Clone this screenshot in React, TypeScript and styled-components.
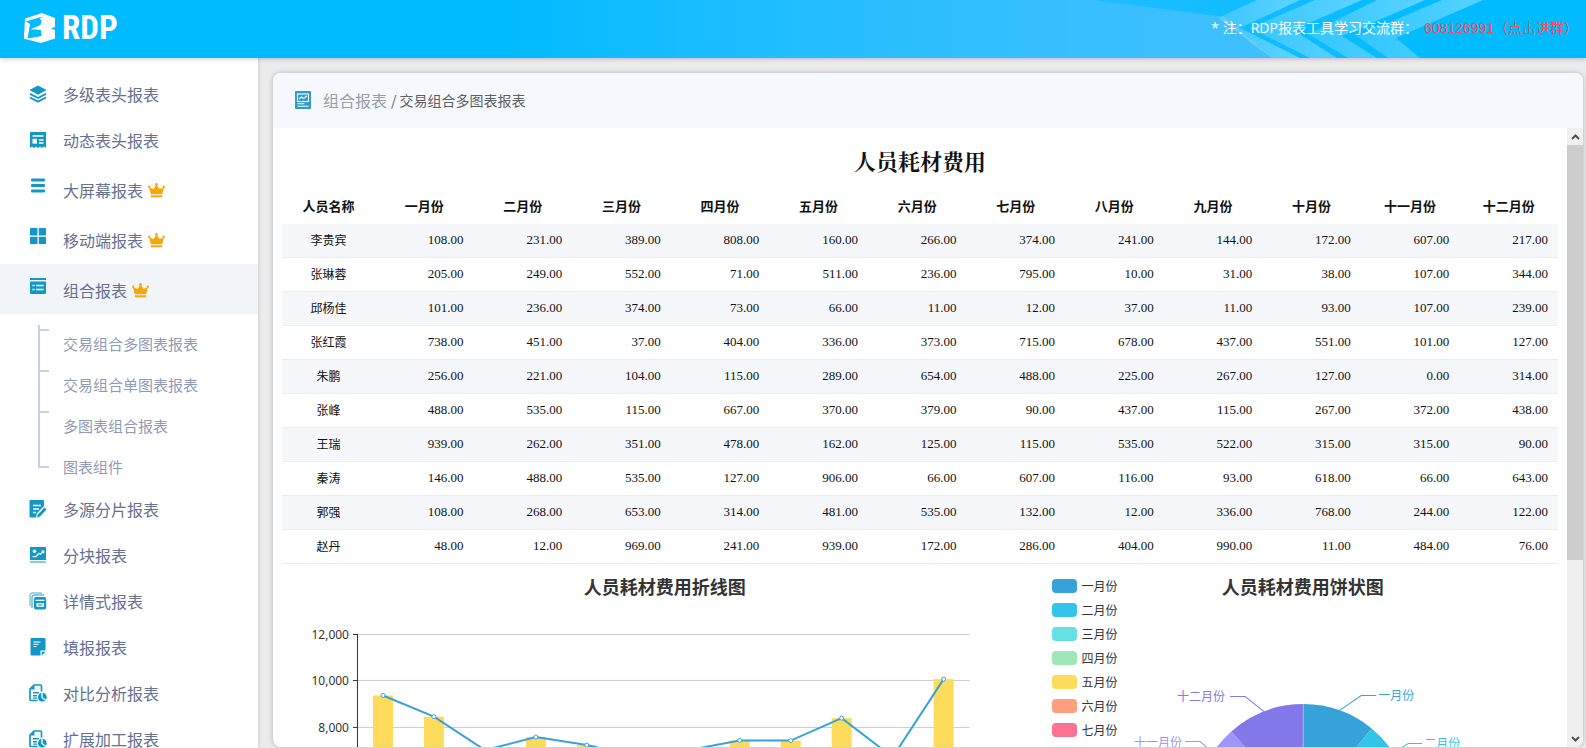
import React from "react";
import styled, { createGlobalStyle } from "styled-components";

const sans = `"Open Sans", "Noto Sans CJK SC", sans-serif`;
const cjk = `"Noto Sans CJK SC", sans-serif`;
const blue = "#1398c6";

const GlobalStyle = createGlobalStyle`
  *, *::before, *::after { box-sizing: border-box; }
  body { margin: 0; font-family: ${sans}; background: #ebebeb; }
  ul { list-style: none; margin: 0; padding: 0; }
  a { color: inherit; text-decoration: none; }
`;

/* ---------- page frame ---------- */

const Page = styled.div`
  display: flex;
  flex-direction: column;
  height: 100vh;
  overflow: hidden;
`;

const Header = styled.header`
  position: relative;
  z-index: 2;
  flex: none;
  display: flex;
  align-items: center;
  justify-content: space-between;
  height: 58px;
  padding: 0 8px 2px 23px;
  background: #00bbff;
  box-shadow: 0 1px 4px rgba(90, 50, 120, 0.3);
`;

const HeaderArt = styled.svg`
  position: absolute;
  top: 0;
  right: 0;
  width: 1086px;
  height: 58px;
`;

const Logo = styled.a`
  position: relative;
  display: flex;
  align-items: center;
  gap: 6px;
  color: #fff;
  font: bold 33px/36px "Liberation Sans Narrow", "Roboto Condensed", Roboto, sans-serif;
`;

const Note = styled.p`
  position: relative;
  margin: 0;
  color: #fff;
  font-size: 14px;
  line-height: 20px;
`;

const NoteLink = styled.a`
  margin-left: 6px;
  color: #f0505f;
  font-family: "Liberation Sans", ${cjk};
`;

const Body = styled.div`
  display: flex;
  flex: 1;
  min-height: 0;
`;

/* ---------- side menu ---------- */

const Sidebar = styled.nav`
  flex: none;
  width: 258px;
  padding-top: 14px;
  overflow: hidden;
  background: #fff;
  box-shadow: 1px 0 3px rgba(0, 0, 0, 0.12);
`;

const MenuLink = styled.a<{ $tall?: boolean; $active?: boolean }>`
  display: flex;
  align-items: center;
  height: ${(p) => (p.$tall ? 50 : 46)}px;
  padding: 0 0 2px 29px;
  background: ${(p) => (p.$active ? "#f1f4f9" : "transparent")};
  color: #66708f;
  font: 16px/24px ${cjk};

  > svg:first-child {
    margin-bottom: ${(p) => (p.$tall ? 4 : 0)}px;
  }
`;

const MenuText = styled.span<{ $tall?: boolean }>`
  margin: ${(p) => (p.$tall ? 4 : 0)}px 5px 0 16px;
`;

const CrownIcon = styled.svg`
  margin-top: 4px;
`;

const SubMenu = styled.ul`
  padding: 11px 0 0 38px;
`;

const SubItem = styled.li`
  display: flex;
  height: 41px;
  color: #8f9bb5;
  font: 15px/38px ${cjk};

  &::before {
    content: "";
    width: 11px;
    height: 41px;
    margin-right: 14px;
    border-left: 2px solid #c5d3e6;
    background: linear-gradient(#c5d3e6, #c5d3e6) 0 4px / 100% 2px no-repeat;
  }

  &:last-child {
    height: 39px;
  }

  &:last-child::before {
    height: 20px;
    background-position: 0 100%;
  }
`;

/* ---------- report card ---------- */

const Main = styled.main`
  flex: 1;
  min-width: 0;
  padding: 15px 3px 1px 15px;
`;

const Card = styled.section`
  display: flex;
  flex-direction: column;
  height: 100%;
  overflow: hidden;
  border-radius: 8px;
  background: #fff;
  box-shadow: 0 0 5px rgba(0, 0, 0, 0.25);
`;

const Crumbs = styled.div`
  flex: none;
  display: flex;
  align-items: center;
  height: 55px;
  padding: 0 0 2px 21px;
  background: #f5f9fd;
  color: #5c6066;
  font: 14px/24px ${cjk};
`;

const CrumbParent = styled.a`
  margin: 0 4px 0 11px;
  color: #999ea4;
  font-size: 16px;
`;

const CrumbPage = styled.span`
  margin-left: 3px;
`;

const ScrollArea = styled.div`
  display: flex;
  flex: 1;
  min-height: 0;
`;

const Report = styled.div`
  flex: 1;
  min-width: 0;
  overflow: hidden;
  padding: 0 9px;
`;

const ScrollBar = styled.div`
  flex: none;
  display: flex;
  flex-direction: column;
  width: 16px;
  background: #f0f0f0;
`;

const ScrollButton = styled.button`
  display: flex;
  align-items: center;
  justify-content: center;
  height: 17px;
  padding: 0;
  border: 0;
  background: #f0f0f0;
`;

const ScrollTrack = styled.div`
  flex: 1;
`;

const ScrollThumb = styled.div`
  height: 71%;
  background: #cdcdcd;
`;

const ReportTitle = styled.h1`
  margin: 0;
  padding: 17px 0 13px;
  color: #111;
  text-align: center;
  font: bold 22px/32px SimSun, "Noto Serif CJK SC", ${cjk};
`;

const Table = styled.table`
  width: 100%;
  table-layout: fixed;
  border-collapse: separate;
  border-spacing: 0;
  color: #111;

  th, td {
    height: 34px;
    padding: 0 0 2px;
  }

  thead th {
    font: bold 13px/20px ${cjk};
  }

  thead th:first-child {
    width: 93px;
  }

  tbody th, tbody td {
    padding-bottom: 1px;
    border-bottom: 1px solid #ebedf1;
  }

  tbody th {
    font: 12px/18px ${cjk};
  }

  td {
    padding-right: 10px;
    text-align: right;
    font: 13px/18px "Liberation Serif", serif;
  }

  tbody tr:nth-child(odd) {
    background: #f5f7fb;
  }
`;

/* ---------- charts ---------- */

const Charts = styled.div`
  display: grid;
  grid-template-columns: 3fr 2fr;
`;

const ChartPanel = styled.section`
  display: grid;
  min-width: 0;
  align-items: start;
`;

const Figure = styled.div`
  grid-area: 1 / 1;
  min-width: 0;
`;

const ChartTitle = styled.h2`
  margin: 0;
  padding: 8px 0 1px;
  color: #333;
  text-align: center;
  font: bold 18px/28px ${cjk};
`;

const ChartSvg = styled.svg`
  display: block;
  width: 100%;
`;

const AxisText = styled.text`
  fill: #333;
  font: 12px "Noto Sans", sans-serif;
  text-anchor: end;
`;

const SliceText = styled.text`
  font: 12px ${cjk};
`;

const Legend = styled.ul`
  grid-area: 1 / 1;
  z-index: 1;
  justify-self: start;
  padding: 10px 0 0 4px;
`;

const LegendItem = styled.li`
  display: flex;
  align-items: center;
  gap: 5px;
  height: 24px;
  color: #333;
  font: 12px/18px ${cjk};
`;

const Swatch = styled.span<{ $color: string }>`
  width: 25px;
  height: 14px;
  border-radius: 4px;
  background: ${(p) => p.$color};
`;

/* ---------- icons ---------- */

const Icon = ({ children }: { children: React.ReactNode }) => (
  <svg width="18" height="18" viewBox="0 0 18 18" fill={blue} aria-hidden="true">
    {children}
  </svg>
);

const icons = {
  layers: (
    <Icon>
      <path d="M9 .5 17.500 5 9 9.800.5 5z" />
      <path d="M1 8.800 9 13l8-4.200M1 12.500 9 16.700l8-4.200" fill="none" stroke={blue} strokeWidth="1.900" />
    </Icon>
  ),
  receipt: (
    <Icon>
      <path d="M1 1h16v16l-2-1.500-2 1.500-2-1.500L9 17l-2-1.500L5 17l-2-1.500L1 17z" />
      <path d="M3.500 5h11M10 9h4.500M10 12h4.500" stroke="#fff" strokeWidth="1.300" />
      <path d="M3.500 7.800h4.500v4.800H3.500z" fill="#fff" />
    </Icon>
  ),
  bars: (
    <Icon>
      <rect x="2" y="1.500" width="14" height="3" rx="1" />
      <rect x="2" y="7" width="14" height="3" rx="1" />
      <rect x="2" y="12.500" width="14" height="3" rx="1" />
    </Icon>
  ),
  tiles: (
    <Icon>
      <rect x="1" y="1" width="7.500" height="7.500" rx=".5" />
      <rect x="9.800" y="1" width="7.200" height="7.500" rx=".5" />
      <rect x="1" y="9.800" width="7.500" height="7.200" rx=".5" />
      <rect x="9.800" y="9.800" width="7.200" height="7.200" rx=".5" />
    </Icon>
  ),
  list: (
    <Icon>
      <path d="M1 1h16v2H1zM1 4.500h16V16q0 1-1 1H2q-1 0-1-1z" />
      <path d="M3.500 8.500h2M7 8.500h7.500M3.500 12.500h2M7 12.500h7.500" stroke="#fff" strokeWidth="1.500" />
    </Icon>
  ),
  edit: (
    <Icon>
      <path d="M1.500 0H14q1 0 1 1v5L8 13l-1 4.500H1.500q-1 0-1-1V1q0-1 1-1z" />
      <path d="M15.500 7.500 17.500 9.500 11 16.500l-3 1 .8-3z" />
      <path d="M4 5.500h8M4 9h6M4 12.500h3" stroke="#fff" strokeWidth="1.300" />
    </Icon>
  ),
  board: (
    <Icon>
      <path d="M1 1h16v13H1zM1 15.500h16v1H1z" />
      <circle cx="5.500" cy="5.200" r="1.800" fill="#fff" />
      <path d="M3.500 10.500c2 .5 3 .5 4-.5l2.500-2.800 1.500 1 3-3M12.500 5h2.200v2.200" fill="none" stroke="#fff" strokeWidth="1.200" />
    </Icon>
  ),
  windows: (
    <Icon>
      <path d="M1 14V3q0-2 2-2h10" fill="none" stroke={blue} strokeWidth=".8" />
      <path d="M3 16V5q0-2 2-2h10" fill="none" stroke={blue} strokeWidth="1" />
      <rect x="5" y="5" width="12.200" height="12.500" rx="2" />
      <path d="M6.500 8.300h9" stroke="#fff" strokeWidth="1.200" />
      <rect x="7.500" y="11" width="7.500" height="3.800" fill="#fff" />
      <path d="M9 13h4.500" stroke={blue} strokeWidth="1.200" />
    </Icon>
  ),
  note: (
    <Icon>
      <path d="M2.500 0h13q1 0 1 1v11.500h-5v5h-9q-1 0-1-1V1q0-1 1-1z" />
      <path d="M12.700 13.700h3.800l-3.800 3.800z" />
      <path d="M4.500 4h7M4.500 6.300h5M4.500 8.500h3" stroke="#fff" strokeWidth="1.100" />
    </Icon>
  ),
  history: (
    <Icon>
      <path d="M8.500 16.500H2q-1 0-1-1V5l4-4h6.500q1 0 1 1v5.500" fill="none" stroke={blue} strokeWidth="1.700" />
      <path d="M1 5.500 5.500 1v4.500zM4 8h6v1.400H4zM4 11h4v1.400H4zM4 13.500h4v1.200H4z" />
      <circle cx="13.300" cy="13.200" r="4.400" />
      <path d="M13 8.500v5l4.500 3.500" fill="none" stroke="#fff" strokeWidth="1.300" />
    </Icon>
  ),
};

const Crown = () => (
  <CrownIcon width="17" height="15" viewBox="0 0 17 15" fill="#f5a70c" role="img" aria-label="VIP">
    <path d="M2.800 11.300 1 4.200l4.500 1.900L8.500 1.500l3 4.600L16 4.200l-1.800 7.100z" />
    <path d="M2.800 12.300h11.400v2H2.800z" />
    <circle cx="1.200" cy="3.800" r="1.200" />
    <circle cx="8.500" cy="1.500" r="1.400" />
    <circle cx="15.800" cy="3.800" r="1.200" />
  </CrownIcon>
);

const ReportIcon = () => (
  <svg width="18" height="18" viewBox="0 0 18 18" aria-hidden="true">
    <rect x="1" y="0" width="16" height="18" rx="1" fill="#2f9cc9" />
    <rect x="3.500" y="3" width="11" height="7.500" fill="none" stroke="#fff" strokeWidth="1.100" />
    <path d="m5 8 2.500-2 2 1.500L13 5M3.500 12.800h7M3.500 15.300h11" fill="none" stroke="#fff" strokeWidth="1.100" />
  </svg>
);

const LogoMark = () => (
  <svg width="33" height="32" viewBox="0 0 33 32" fill="#fff" aria-hidden="true">
    <path d="M2 6.500 19 1l13 5v9l-4 1.500 4 1.500v8.500L18 31 1 26.800z" />
    <path d="M2.800 9.500 19.500 4.500 16.500 7 18.500 8.500 17.500 13 7.500 17.200 18 18 18.500 24 4.500 26.500 7 12.500z" fill="#00bbff" />
    <path d="M1 26.800 2.800 9.500 6.300 11.500 3.500 26.500z" />
  </svg>
);

/* ---------- data ---------- */

const menuTop = [
  { label: "多级表头报表", icon: icons.layers },
  { label: "动态表头报表", icon: icons.receipt },
  { label: "大屏幕报表", icon: icons.bars, vip: true },
  { label: "移动端报表", icon: icons.tiles, vip: true },
  { label: "组合报表", icon: icons.list, vip: true, active: true },
];

const subMenu = ["交易组合多图表报表", "交易组合单图表报表", "多图表组合报表", "图表组件"];

const menuBottom = [
  { label: "多源分片报表", icon: icons.edit },
  { label: "分块报表", icon: icons.board },
  { label: "详情式报表", icon: icons.windows },
  { label: "填报报表", icon: icons.note },
  { label: "对比分析报表", icon: icons.history },
  { label: "扩展加工报表", icon: icons.history },
];

const months = ["一月份", "二月份", "三月份", "四月份", "五月份", "六月份", "七月份", "八月份", "九月份", "十月份", "十一月份", "十二月份"];

const rows: [string, number[]][] = [
  ["李贵宾", [108, 231, 389, 808, 160, 266, 374, 241, 144, 172, 607, 217]],
  ["张琳蓉", [205, 249, 552, 71, 511, 236, 795, 10, 31, 38, 107, 344]],
  ["邱杨佳", [101, 236, 374, 73, 66, 11, 12, 37, 11, 93, 107, 239]],
  ["张红霞", [738, 451, 37, 404, 336, 373, 715, 678, 437, 551, 101, 127]],
  ["朱鹏", [256, 221, 104, 115, 289, 654, 488, 225, 267, 127, 0, 314]],
  ["张峰", [488, 535, 115, 667, 370, 379, 90, 437, 115, 267, 372, 438]],
  ["王瑞", [939, 262, 351, 478, 162, 125, 115, 535, 522, 315, 315, 90]],
  ["秦涛", [146, 488, 535, 127, 906, 66, 607, 116, 93, 618, 66, 643]],
  ["郭强", [108, 268, 653, 314, 481, 535, 132, 12, 336, 768, 244, 122]],
  ["赵丹", [48, 12, 969, 241, 939, 172, 286, 404, 990, 11, 484, 76]],
];

const legend = [
  ["一月份", "#37a2da"],
  ["二月份", "#32c5e9"],
  ["三月份", "#67e0e3"],
  ["四月份", "#9fe6b8"],
  ["五月份", "#ffdb5c"],
  ["六月份", "#ff9f7f"],
  ["七月份", "#fb7293"],
];

const totals = [9376, 8464, 7023, 7584, 7240, 6720, 7023, 7441, 7432, 8400, 6722, 10077];

/* ---------- parts ---------- */

type Entry = { label: string; icon: React.ReactNode; vip?: boolean; active?: boolean };

const MenuEntry = ({ label, icon, vip, active }: Entry) => (
  <li>
    <MenuLink href="#" $tall={vip} $active={active}>
      {icon}
      <MenuText $tall={vip}>{label}</MenuText>
      {vip && <Crown />}
    </MenuLink>
  </li>
);

const yOf = (value: number) => 33.5 + ((12000 - value) / 2000) * 46.5;
const xOf = (index: number) => 101 + index * 51;

const TrendChart = () => (
  <ChartSvg viewBox="0 0 766 240" role="img" aria-label="人员耗材费用折线图">
    {[12000, 10000, 8000].map((v) => (
      <g key={v}>
        <path d={`M76 ${Math.round(yOf(v)) - 0.5}H688`} stroke="#ccc" />
        <path d={`M71 ${Math.round(yOf(v)) - 0.5}h5`} stroke="#333" />
        <AxisText x="67" y={Math.round(yOf(v)) + 4}>{v.toLocaleString("en-US")}</AxisText>
      </g>
    ))}
    <path d="M75.500 33V240" stroke="#333" />
    {totals.map((v, i) => (
      <rect key={i} x={xOf(i) - 10} y={yOf(v)} width="20" height={240 - yOf(v)} fill="#ffdb5c" />
    ))}
    <polyline points={totals.map((v, i) => `${xOf(i)},${yOf(v)}`).join(" ")} fill="none" stroke="#37a2da" strokeWidth="2" />
    {totals.map((v, i) => (
      <circle key={i} cx={xOf(i)} cy={yOf(v)} r="2" fill="#fff" stroke="#37a2da" />
    ))}
  </ChartSvg>
);

const arc = (from: number, to: number) => {
  const point = (deg: number) => {
    const a = (deg * Math.PI) / 180;
    return `${255 + 108 * Math.sin(a)} ${211 - 108 * Math.cos(a)}`;
  };
  return `M255 211L${point(from)}A108 108 0 0 1 ${point(to)}Z`;
};

const PieChart = () => (
  <ChartSvg viewBox="0 0 510 340" role="img" aria-label="人员耗材费用饼状图">
    <path d={arc(0, 39.3)} fill="#37a2da" />
    <path d={arc(39.3, 82)} fill="#32c5e9" />
    <path d={arc(-80, -41.7)} fill="#9d96f5" />
    <path d={arc(-41.7, 0)} fill="#8378ea" />
    <path d="M255 103V211" stroke="#a9b4ee" />
    <g fill="none">
      <path d="M291 109.500 313 94.500h15" stroke="#37a2da" />
      <path d="M216 110.500 197 95.500h-15" stroke="#8378ea" />
      <path d="M348 149.500 360 142.500h14" stroke="#32c5e9" />
      <path d="M160 147.500 152 140.500h-15" stroke="#9d96f5" />
    </g>
    <SliceText x="330" y="99" fill="#37a2da">一月份</SliceText>
    <SliceText x="129" y="100" fill="#8378ea">十二月份</SliceText>
    <SliceText x="376" y="147" fill="#32c5e9">二月份</SliceText>
    <SliceText x="86" y="146" fill="#9d96f5">十一月份</SliceText>
  </ChartSvg>
);

export default function App() {
  return (
    <Page>
      <GlobalStyle />
      <Header>
        <HeaderArt viewBox="0 0 1086 58" aria-hidden="true">
          <defs>
            <linearGradient id="glow" x1="0" x2="1" y1="0" y2="0">
              <stop offset="0" stopColor="#45c0ff" stopOpacity="0" />
              <stop offset="0.700" stopColor="#45c0ff" stopOpacity="0.600" />
              <stop offset="1" stopColor="#45c0ff" stopOpacity="0.900" />
            </linearGradient>
            <linearGradient id="haze" x1="0" x2="1" y1="0" y2="0">
              <stop offset="0" stopColor="#45c0ff" stopOpacity="0" />
              <stop offset="0.600" stopColor="#45c0ff" stopOpacity="0.450" />
              <stop offset="1" stopColor="#45c0ff" stopOpacity="0" />
            </linearGradient>
            <linearGradient id="band" x1="0" x2="1" y1="0" y2="0">
              <stop offset="0" stopColor="#fff" stopOpacity="0.160" />
              <stop offset="1" stopColor="#fff" stopOpacity="0.340" />
            </linearGradient>
          </defs>
          <path d="M0 0H960V58H0z" fill="url(#haze)" />
          <path d="M0 0H592L725 17 772 58H0z" fill="url(#glow)" />
          <g fill="url(#band)">
            <path d="M757 0h43l-60 28 60 30h-28L718 18z" />
            <path d="M815 0h47l-69 30 44 28h-27l-60-30z" />
            <path d="M877 0h48l-83 36 35 22h-29l-40-24z" />
            <path d="M942 0h41l-87 38 24 20h-32l-31-22z" />
          </g>
        </HeaderArt>
        <Logo href="#">
          <LogoMark />
          RDP
        </Logo>
        <Note>
          * 注：RDP报表工具学习交流群：
          <NoteLink href="#">608126991（点击进群）</NoteLink>
        </Note>
      </Header>
      <Body>
        <Sidebar>
          <ul>
            {menuTop.map((m) => (
              <MenuEntry key={m.label} {...m} />
            ))}
          </ul>
          <SubMenu>
            {subMenu.map((s) => (
              <SubItem key={s}>
                <a href="#">{s}</a>
              </SubItem>
            ))}
          </SubMenu>
          <ul>
            {menuBottom.map((m) => (
              <MenuEntry key={m.label} {...m} />
            ))}
          </ul>
        </Sidebar>
        <Main>
          <Card>
            <Crumbs>
              <ReportIcon />
              <CrumbParent href="#">组合报表</CrumbParent>/<CrumbPage>交易组合多图表报表</CrumbPage>
            </Crumbs>
            <ScrollArea>
              <Report>
                <ReportTitle>人员耗材费用</ReportTitle>
                <Table>
                  <thead>
                    <tr>
                      <th scope="col">人员名称</th>
                      {months.map((m) => (
                        <th key={m} scope="col">{m}</th>
                      ))}
                    </tr>
                  </thead>
                  <tbody>
                    {rows.map(([name, values]) => (
                      <tr key={name}>
                        <th scope="row">{name}</th>
                        {values.map((v, i) => (
                          <td key={i}>{v.toFixed(2)}</td>
                        ))}
                      </tr>
                    ))}
                  </tbody>
                </Table>
                <Charts>
                  <ChartPanel>
                    <Figure>
                      <ChartTitle>人员耗材费用折线图</ChartTitle>
                      <TrendChart />
                    </Figure>
                  </ChartPanel>
                  <ChartPanel>
                    <Legend>
                      {legend.map(([name, color]) => (
                        <LegendItem key={name}>
                          <Swatch $color={color} />
                          {name}
                        </LegendItem>
                      ))}
                    </Legend>
                    <Figure>
                      <ChartTitle>人员耗材费用饼状图</ChartTitle>
                      <PieChart />
                    </Figure>
                  </ChartPanel>
                </Charts>
              </Report>
              <ScrollBar>
                <ScrollButton type="button" aria-label="向上滚动">
                  <svg width="9" height="6" viewBox="0 0 9 6" fill="none" stroke="#505050" strokeWidth="2">
                    <path d="m1 5 3.500-3.500L8 5" />
                  </svg>
                </ScrollButton>
                <ScrollTrack>
                  <ScrollThumb />
                </ScrollTrack>
                <ScrollButton type="button" aria-label="向下滚动">
                  <svg width="9" height="6" viewBox="0 0 9 6" fill="none" stroke="#505050" strokeWidth="2">
                    <path d="m1 1 3.500 3.500L8 1" />
                  </svg>
                </ScrollButton>
              </ScrollBar>
            </ScrollArea>
          </Card>
        </Main>
      </Body>
    </Page>
  );
}
